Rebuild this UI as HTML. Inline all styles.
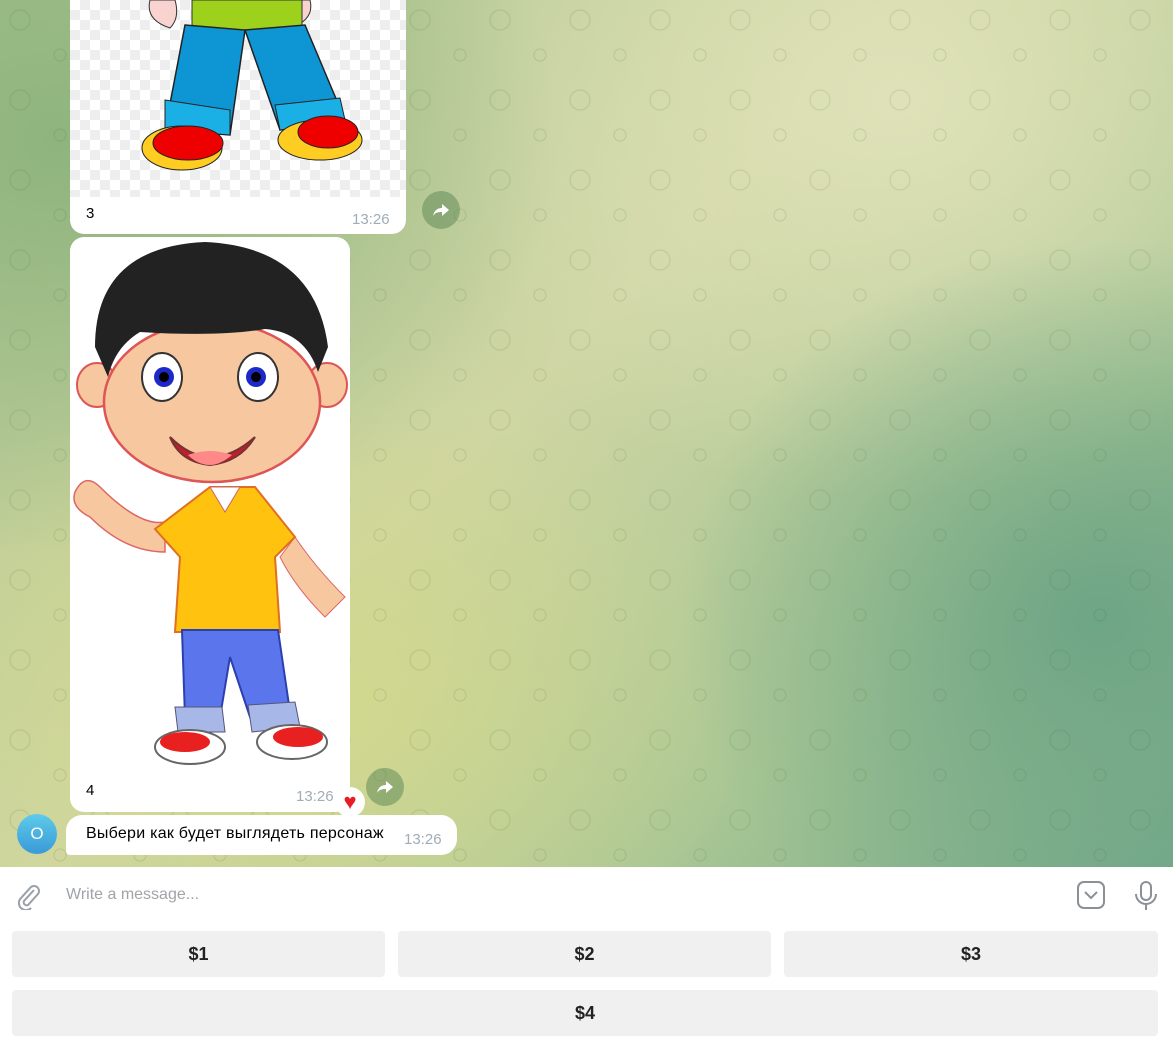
<!DOCTYPE html>
<html><head><meta charset="utf-8"><style>
*{margin:0;padding:0;box-sizing:border-box}
body{width:1173px;height:1042px;overflow:hidden;font-family:"Liberation Sans","DejaVu Sans",sans-serif;position:relative;background:#fff}
.bg{position:absolute;left:0;top:0;width:1173px;height:867px;
background:
radial-gradient(ellipse 420px 380px at 1100px 620px,#6ea585 0%,rgba(110,165,133,0) 100%),
radial-gradient(ellipse 500px 420px at 60px 140px,#8fb47e 0%,rgba(143,180,126,0) 100%),
radial-gradient(ellipse 450px 350px at 300px 700px,#d2d88c 0%,rgba(210,216,140,0) 100%),
radial-gradient(ellipse 500px 400px at 900px 100px,#dfe2b8 0%,rgba(223,226,184,0) 100%),
linear-gradient(135deg,#a9c38f 0%,#cfd6a4 45%,#a8c694 75%,#74a98a 100%);}
.pat{position:absolute;left:0;top:0;width:1173px;height:867px;opacity:.18;
background-image:radial-gradient(circle at 20px 20px,transparent 9px,#4a6a3a 10px,transparent 11px),radial-gradient(circle at 60px 55px,transparent 5px,#4a6a3a 6px,transparent 7px);background-size:80px 80px,80px 80px}
.b{position:absolute;background:#fff;border-radius:14px}
.t{position:absolute;font-size:15px;color:#a0acb6}
.cap{position:absolute;font-size:15px;color:#000}
.fw{position:absolute;width:38px;height:38px;border-radius:50%;background:rgba(100,140,90,.55)}
.btn{position:absolute;background:#f0f0f0;border-radius:4px;font-size:18px;font-weight:bold;color:#222;display:flex;align-items:center;justify-content:center}
.chk{position:absolute;left:70px;top:0;width:336px;height:197px;
background-color:#fff;background-image:linear-gradient(45deg,#eee 25%,transparent 25%,transparent 75%,#eee 75%),linear-gradient(45deg,#eee 25%,transparent 25%,transparent 75%,#eee 75%);background-size:20px 20px;background-position:0 0,10px 10px}
</style></head><body>
<div class="bg"></div>
<div class="pat"></div>
<div class="b" style="left:70px;top:-14px;width:336px;height:248px"></div>
<div class="chk"></div>
<svg style="position:absolute;left:70px;top:0" width="336" height="197">
<path d="M80 0 q-5 20 20 28 q10 -10 5 -28z" fill="#f9d3cf" stroke="#333"/>
<path d="M240 0 q5 20 -20 28 q-10 -10 -5 -28z" fill="#f9d3cf" stroke="#333"/>
<rect x="122" y="0" width="110" height="30" fill="#9ed11c" stroke="#333"/>
<path d="M115 25 L175 30 L160 135 L95 130 Z" fill="#0e95d3" stroke="#222" stroke-width="1.5"/>
<path d="M175 30 L235 25 L275 120 L210 130 Z" fill="#0e95d3" stroke="#222" stroke-width="1.5"/>
<path d="M95 100 L160 110 L160 135 L95 130 Z" fill="#1ab0e6" stroke="#222"/>
<path d="M205 105 L270 98 L275 120 L210 130 Z" fill="#1ab0e6" stroke="#222"/>
<ellipse cx="112" cy="148" rx="40" ry="22" fill="#fc2" stroke="#222"/>
<ellipse cx="118" cy="143" rx="35" ry="17" fill="#e00" stroke="#222"/>
<ellipse cx="250" cy="140" rx="42" ry="20" fill="#fc2" stroke="#222"/>
<ellipse cx="258" cy="132" rx="30" ry="16" fill="#e00" stroke="#222"/>
</svg>
<div class="cap" style="left:86px;top:205px">3</div>
<div class="t" style="left:352px;top:211px">13:26</div>
<div class="fw" style="left:422px;top:191px"></div>
<svg style="position:absolute;left:431px;top:200px" width="20" height="20"><path d="M11 4 L18 10 L11 16 V12 C6 12 4 13 2 16 C3 11 6 8 11 8Z" fill="#fff"/></svg>
<div class="b" style="left:70px;top:237px;width:280px;height:575px"></div>
<svg style="position:absolute;left:70px;top:237px" width="280" height="545">
<path d="M225 300 q20 30 50 60 l-20 20 q-30 -30 -45 -60z" fill="#f7c8a0" stroke="#d66"/>
<path d="M5 255 q10 -20 25 -5 q40 40 65 35 l0 30 q-40 0 -75 -35 q-20 -10 -15 -25z" fill="#f7c8a0" stroke="#d66" stroke-width="1.5"/>
<path d="M85 292 L140 250 L185 250 L225 300 L205 320 L210 395 L105 395 L110 320 Z" fill="#ffc20e" stroke="#e07020" stroke-width="2"/>
<path d="M140 250 l15 25 l15 -25z" fill="#fff" stroke="#c66"/>
<path d="M112 393 L208 393 L220 475 L180 480 L160 420 L150 480 L115 480 Z" fill="#5b76ec" stroke="#2c3fb0" stroke-width="2"/>
<path d="M105 470 L152 470 L155 495 L108 495Z" fill="#a7b7e8" stroke="#557"/>
<path d="M178 468 L225 465 L230 490 L182 495Z" fill="#a7b7e8" stroke="#557"/>
<ellipse cx="120" cy="510" rx="35" ry="17" fill="#fff" stroke="#666" stroke-width="2"/>
<ellipse cx="115" cy="505" rx="25" ry="10" fill="#e82020"/>
<ellipse cx="222" cy="505" rx="35" ry="17" fill="#fff" stroke="#666" stroke-width="2"/>
<ellipse cx="228" cy="500" rx="25" ry="10" fill="#e82020"/>
<ellipse cx="27" cy="148" rx="20" ry="22" fill="#f7c8a0" stroke="#d55" stroke-width="2"/>
<ellipse cx="257" cy="148" rx="20" ry="22" fill="#f7c8a0" stroke="#d55" stroke-width="2"/>
<ellipse cx="142" cy="165" rx="108" ry="80" fill="#f7c8a0" stroke="#d55" stroke-width="2.5"/>
<path d="M25 110 Q25 10 135 5 Q245 10 258 110 L248 135 Q235 95 195 92 Q150 100 70 95 Q45 110 38 140 Z" fill="#222"/>
<ellipse cx="92" cy="140" rx="20" ry="24" fill="#fff" stroke="#333" stroke-width="2"/>
<ellipse cx="188" cy="140" rx="20" ry="24" fill="#fff" stroke="#333" stroke-width="2"/>
<circle cx="94" cy="140" r="10" fill="#1c28c8"/><circle cx="94" cy="140" r="5" fill="#000"/>
<circle cx="186" cy="140" r="10" fill="#1c28c8"/><circle cx="186" cy="140" r="5" fill="#000"/>
<path d="M100 200 Q140 240 185 200 Q170 225 140 228 Q110 225 100 200Z" fill="#c0202a" stroke="#733" stroke-width="2"/>
<path d="M118 218 Q140 210 162 218 Q150 228 140 228 Q128 228 118 218Z" fill="#f88"/>
</svg>
<div class="cap" style="left:86px;top:782px">4</div>
<div class="t" style="left:296px;top:788px">13:26</div>
<div style="position:absolute;left:335px;top:787px;width:30px;height:30px;border-radius:50%;background:#fff;display:flex;align-items:center;justify-content:center;color:#e81c24;font-size:22px">♥</div>
<div class="fw" style="left:366px;top:768px"></div>
<svg style="position:absolute;left:375px;top:777px" width="20" height="20"><path d="M11 4 L18 10 L11 16 V12 C6 12 4 13 2 16 C3 11 6 8 11 8Z" fill="#fff"/></svg>
<div style="position:absolute;left:17px;top:814px;width:40px;height:40px;border-radius:50%;background:linear-gradient(#5dcbe9,#3a9ad8);color:#fff;font-size:17px;display:flex;align-items:center;justify-content:center">O</div>
<div class="b" style="left:66px;top:815px;width:391px;height:40px;border-radius:16px 16px 16px 4px"></div>
<div class="cap" style="left:86px;top:825px;font-size:16px;letter-spacing:0.25px">Выбери как будет выглядеть персонаж</div>
<div class="t" style="left:404px;top:831px">13:26</div>
<svg style="position:absolute;left:15px;top:882px" width="28" height="28" fill="none" stroke="#9aa0a6" stroke-width="2"><path d="M19 8 L9 19 a3 3 0 0 0 4 4 L23 12 a5 5 0 0 0 -7 -7 L6 16 a7 7 0 0 0 10 10"/></svg>
<div style="position:absolute;left:66px;top:886px;font-size:16px;color:#a0a4a8">Write a message...</div>
<svg style="position:absolute;left:1076px;top:880px" width="30" height="30" fill="none" stroke="#8a9096" stroke-width="2"><rect x="2" y="2" width="26" height="26" rx="6"/><path d="M9 12 l6 6 l6 -6"/></svg>
<svg style="position:absolute;left:1133px;top:880px" width="26" height="32" fill="none" stroke="#8a9096" stroke-width="2"><rect x="8" y="2" width="10" height="18" rx="5"/><path d="M3 14 a10 10 0 0 0 20 0 M13 24 v6"/></svg>
<div class="btn" style="left:12px;top:931px;width:373px;height:46px">$1</div>
<div class="btn" style="left:398px;top:931px;width:373px;height:46px">$2</div>
<div class="btn" style="left:784px;top:931px;width:374px;height:46px">$3</div>
<div class="btn" style="left:12px;top:990px;width:1146px;height:46px">$4</div>
</body></html>
